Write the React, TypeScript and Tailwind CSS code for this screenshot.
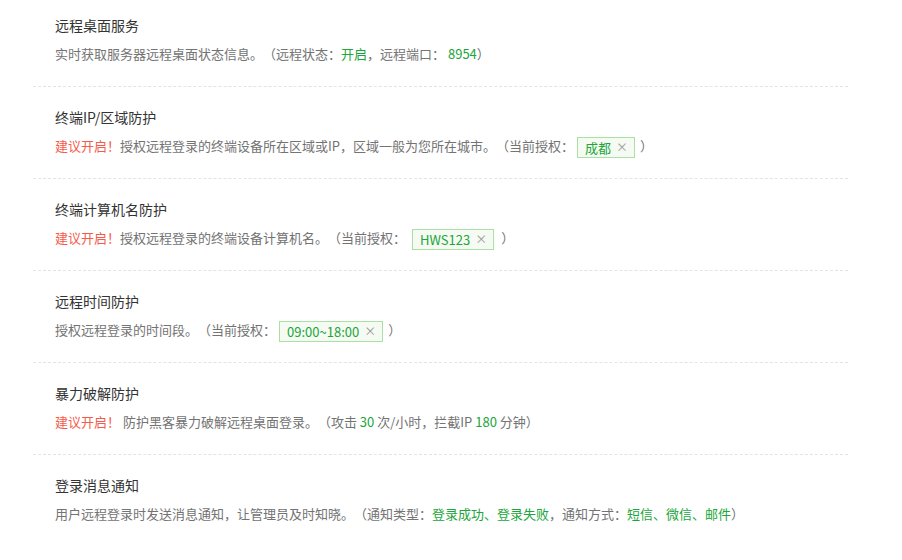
import React from 'react'

const GREEN = 'text-[#20a53a]'

function Tag({ label }: { label: string }) {
  return (
    <span className="inline-flex items-center h-[21px] pl-[7px] pr-[6px] ml-[3px] mr-[5px] border border-[#a9e0a3] bg-[#f5fbf2] text-[#20a53a] leading-none align-middle">
      <span>{label}</span>
      <span className="ml-[5px] text-[#999] text-[12px]">×</span>
    </span>
  )
}

const Warn = () => <span className="text-[#f55b4b]">建议开启！</span>

type Item = { title: string; desc: React.ReactNode }

const items: Item[] = [
  {
    title: '远程桌面服务',
    desc: (
      <>
        实时获取服务器远程桌面状态信息。（远程状态：<span className={GREEN}>开启</span>，远程端口：{' '}
        <span className={GREEN}>8954</span>）
      </>
    ),
  },
  {
    title: '终端IP/区域防护',
    desc: (
      <>
        <Warn />
        授权远程登录的终端设备所在区域或IP，区域一般为您所在城市。（当前授权：
        <Tag label="成都" />）
      </>
    ),
  },
  {
    title: '终端计算机名防护',
    desc: (
      <>
        <Warn />
        授权远程登录的终端设备计算机名。（当前授权：
        <span className="inline-block w-[3px]" />
        <Tag label="HWS123" />
        <span className="inline-block w-[2px]" />）
      </>
    ),
  },
  {
    title: '远程时间防护',
    desc: (
      <>
        授权远程登录的时间段。（当前授权：
        <Tag label="09:00~18:00" />）
      </>
    ),
  },
  {
    title: '暴力破解防护',
    desc: (
      <>
        <Warn /> 防护黑客暴力破解远程桌面登录。（攻击 <span className={GREEN}>30</span> 次/小时，拦截IP{' '}
        <span className={GREEN}>180</span> 分钟）
      </>
    ),
  },
  {
    title: '登录消息通知',
    desc: (
      <>
        用户远程登录时发送消息通知，让管理员及时知晓。（通知类型：
        <span className={GREEN}>登录成功、登录失败</span>，通知方式：
        <span className={GREEN}>短信、微信、邮件</span>）
      </>
    ),
  },
]

export default function App() {
  return (
    <div
      className="w-[902px] h-[560px] bg-white overflow-hidden [text-spacing-trim:space-all]"
      style={{ fontFamily: '"Noto Sans CJK SC", "Liberation Sans", sans-serif' }}
    >
      <div className="ml-[33px] w-[815px]">
        {items.map((item, i) => (
          <div
            key={i}
            className={`px-[22px] pt-[20px] first:pt-[15px] pb-[21px] ${
              i < items.length - 1 ? 'border-b border-dashed border-[#e4e4e4]' : ''
            }`}
          >
            <div className="text-[14px] leading-[20px] text-[#333]">{item.title}</div>
            <div className="mt-[8px] text-[13px] leading-[22px] h-[22px] text-[#737373] whitespace-nowrap">
              {item.desc}
            </div>
          </div>
        ))}
      </div>
    </div>
  )
}
